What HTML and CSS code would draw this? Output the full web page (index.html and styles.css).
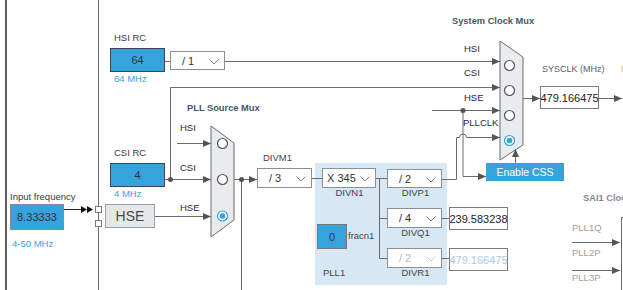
FILE: index.html
```html
<!DOCTYPE html>
<html lang="en">
<head>
    <meta charset="UTF-8">
    <title>Clock Configuration</title>
    <link rel="stylesheet" href="styles.css">
</head>
<body>

<div class="diagram">
    <!-- PLL1 block background -->
    <div class="pll-panel"></div>

    <!-- wires, muxes, arrows -->
    <svg class="wires" width="623" height="290" viewBox="0 0 623 290">
        <defs>
            <marker id="arr" markerUnits="userSpaceOnUse" markerWidth="9" markerHeight="8" refX="8" refY="3.5" orient="auto">
                <path d="M0,0 L8,3.5 L0,7 z" fill="#555"/>
            </marker>
        </defs>

        <line class="rail" x1="6" y1="0" x2="6" y2="290"/>
        <line class="wire" x1="98.5" y1="0" x2="98.5" y2="290"/>

        <!-- HSI -->
        <path class="wire" d="M165 61.5 H170"/>
        <path class="wire" d="M225 61.5 H500" marker-end="url(#arr)"/>
        <path class="wire" d="M177 143.5 H211" marker-end="url(#arr)"/>

        <!-- CSI -->
        <path class="wire" d="M165 179.5 H211" marker-end="url(#arr)"/>
        <path class="wire" d="M170.5 179.5 V87.5 H500" marker-end="url(#arr)"/>
        <circle class="dot" cx="170.5" cy="179.5" r="2.5"/>

        <!-- HSE -->
        <path class="wire" d="M155 216.5 H211" marker-end="url(#arr)"/>
        <path class="wire-dark" d="M64 209.5 H82"/>
        <path d="M81 206 L87 209.5 L81 213 z M87 206 L93 209.5 L87 213 z" fill="#111"/>
        <rect class="port" x="95.5" y="206.5" width="6" height="6"/>
        <rect class="port" x="95.5" y="220.5" width="6" height="6"/>

        <!-- PLL source mux -->
        <polygon class="mux" points="211,126 234,143 234,220 211,237"/>
        <circle class="sel" cx="222.5" cy="143.5" r="5"/>
        <circle class="sel" cx="222.5" cy="179.5" r="5"/>
        <circle class="sel on" cx="222.5" cy="216" r="5"/>
        <circle class="pick" cx="222.5" cy="216" r="2.8"/>
        <path class="wire" d="M234 179.5 H257" marker-end="url(#arr)"/>
        <path class="wire" d="M241.5 179.5 V290"/>
        <circle class="dot" cx="241.5" cy="179.5" r="2.5"/>

        <!-- PLL1 dividers -->
        <path class="wire" d="M312 178.5 H322"/>
        <path class="wire" d="M376 178.5 H387 M379.5 178.5 V258.5 M379.5 218.5 H387 M379.5 258.5 H387"/>
        <path class="wire" d="M442 218.5 H449 M442 258.5 H449"/>
        <path class="wire" d="M442 179.5 H456.5 V137.5 H459.5 A3.5 3.5 0 0 1 466.5 137.5 H500" marker-end="url(#arr)"/>

        <!-- HSE to system mux and CSS -->
        <path class="wire" d="M432 110.5 H500" marker-end="url(#arr)"/>
        <path class="wire" d="M463 110.5 V176.5 H486" marker-end="url(#arr)"/>
        <circle class="dot" cx="463" cy="110.5" r="2.5"/>

        <!-- system clock mux -->
        <polygon class="mux" points="500,41 523,57 523,145 500,160"/>
        <circle class="sel" cx="509.5" cy="65.5" r="5"/>
        <circle class="sel" cx="509.5" cy="90.5" r="5"/>
        <circle class="sel" cx="509.5" cy="115.5" r="5"/>
        <circle class="sel on" cx="509.5" cy="140.5" r="5"/>
        <circle class="pick" cx="509.5" cy="140.5" r="2.8"/>
        <path class="wire" d="M515.5 163 V149" marker-end="url(#arr)"/>
        <path class="wire" d="M523 98.5 H540" marker-end="url(#arr)"/>
        <path class="wire" d="M599 98.5 H622" marker-end="url(#arr)"/>

        <!-- SAI1 mux edge -->
        <path class="wire" d="M621.5 217 V290 M621.5 217.5 H623"/>
        <path class="wire" d="M572 242.5 H620" marker-end="url(#arr)"/>
        <path class="wire" d="M572 270.5 H620" marker-end="url(#arr)"/>
    </svg>

    <!-- labels -->
    <span class="label hsi-title">HSI RC</span>
    <span class="label freq hsi-freq">64 MHz</span>
    <span class="label csi-title">CSI RC</span>
    <span class="label freq csi-freq">4 MHz</span>
    <span class="label in-title">Input frequency</span>
    <span class="label freq in-range">4-50 MHz</span>

    <span class="label mux-title pll-mux-title">PLL Source Mux</span>
    <span class="label src pll-hsi">HSI</span>
    <span class="label src pll-csi">CSI</span>
    <span class="label src pll-hse">HSE</span>

    <span class="label mux-title sys-mux-title">System Clock Mux</span>
    <span class="label src sys-hsi">HSI</span>
    <span class="label src sys-csi">CSI</span>
    <span class="label src sys-hse">HSE</span>
    <span class="label src sys-pll">PLLCLK</span>
    <span class="label sysclk-title">SYSCLK (MHz)</span>
    <span class="label hclk-title">HCLK</span>

    <span class="label div-name divm-name">DIVM1</span>
    <span class="label div-name divn-name">DIVN1</span>
    <span class="label div-name divp-name">DIVP1</span>
    <span class="label div-name divq-name">DIVQ1</span>
    <span class="label div-name divr-name">DIVR1</span>
    <span class="label frac-name">fracn1</span>
    <span class="label pll-name">PLL1</span>

    <span class="label mux-title sai-title">SAI1 Clock Mux</span>
    <span class="label sai-src sai-q">PLL1Q</span>
    <span class="label sai-src sai-p2">PLL2P</span>
    <span class="label sai-src sai-p3">PLL3P</span>

    <!-- sources -->
    <div class="node value-box hsi-box">64</div>
    <div class="node value-box csi-box">4</div>
    <div class="node value-box in-box">8.33333</div>
    <div class="node hse-box">HSE</div>
    <div class="node value-box frac-box">0</div>

    <!-- dividers -->
    <div class="node select dd-hsi"><span>/ 1</span><svg class="chev" viewBox="0 0 10 6"><polyline points="0.5,0.5 5,5 9.5,0.5"/></svg></div>
    <div class="node select dd-divm"><span>/ 3</span><svg class="chev" viewBox="0 0 10 6"><polyline points="0.5,0.5 5,5 9.5,0.5"/></svg></div>
    <div class="node select dd-divn"><span>X 345</span><svg class="chev" viewBox="0 0 10 6"><polyline points="0.5,0.5 5,5 9.5,0.5"/></svg></div>
    <div class="node select dd-divp"><span>/ 2</span><svg class="chev" viewBox="0 0 10 6"><polyline points="0.5,0.5 5,5 9.5,0.5"/></svg></div>
    <div class="node select dd-divq"><span>/ 4</span><svg class="chev" viewBox="0 0 10 6"><polyline points="0.5,0.5 5,5 9.5,0.5"/></svg></div>
    <div class="node select disabled dd-divr"><span>/ 2</span><svg class="chev" viewBox="0 0 10 6"><polyline points="0.5,0.5 5,5 9.5,0.5"/></svg></div>

    <!-- outputs -->
    <div class="node out out-sys">479.166475</div>
    <div class="node out out-q">239.583238</div>
    <div class="node out disabled out-r">479.166475</div>

    <div class="node css-btn">Enable CSS</div>
</div>

</body>
</html>
```

FILE: styles.css
```css
body {
    margin: 0;
    background: #fff;
    font-family: "Liberation Sans", Arial, sans-serif;
}

.diagram {
    position: relative;
    width: 623px;
    height: 290px;
    overflow: hidden;
    background: #fff;
}

.wires {
    position: absolute;
    left: 0;
    top: 0;
}

.wire {
    fill: none;
    stroke: #6b6b6b;
    stroke-width: 1;
}

.wire-dark {
    fill: none;
    stroke: #222;
    stroke-width: 1;
}

.rail {
    stroke: #5e5e5e;
    stroke-width: 2;
}

.dot {
    fill: #555;
}

.port {
    fill: #fff;
    stroke: #777;
}

.mux {
    fill: #e8ecef;
    stroke: #6b6b6b;
}

.sel {
    fill: #fff;
    stroke: #555;
    stroke-width: 1.2;
}

.sel.on {
    stroke: #33a3dc;
}

.pick {
    fill: #33a3dc;
}

/* PLL1 block */
.pll-panel {
    position: absolute;
    left: 315px;
    top: 163px;
    width: 132px;
    height: 122px;
    background: #d8e7f4;
}

/* text labels */
.label {
    position: absolute;
    font-size: 9.5px;
    line-height: 12px;
    color: #3a3a3a;
    white-space: nowrap;
}

.freq {
    color: #3aa2e6;
}

.src {
    color: #1e2a44;
}

.mux-title {
    font-weight: bold;
    font-size: 9.3px;
    color: #4a5563;
}

.div-name {
    color: #444;
    width: 55px;
    text-align: center;
}

.sai-src {
    color: #a99e90;
}

.hsi-title { left: 114px; top: 32px; }
.hsi-freq { left: 114px; top: 73px; }
.csi-title { left: 114px; top: 147px; }
.csi-freq { left: 114px; top: 188px; }
.in-title { left: 10px; top: 191px; }
.in-range { left: 12px; top: 238px; }

.pll-mux-title { left: 187px; top: 102px; }
.pll-hsi { left: 180px; top: 122px; }
.pll-csi { left: 180px; top: 162px; }
.pll-hse { left: 180px; top: 202px; }

.sys-mux-title { left: 452px; top: 15px; }
.sys-hsi { left: 464px; top: 43px; }
.sys-csi { left: 464px; top: 67px; }
.sys-hse { left: 464px; top: 92px; }
.sys-pll { left: 463px; top: 117px; }
.sysclk-title { left: 542px; top: 63px; color: #5c5c5c; font-size: 9px; }
.hclk-title { left: 621px; top: 63px; color: #f2b46a; }

.divm-name { left: 263px; top: 152px; width: auto; }
.divn-name { left: 322px; top: 187px; }
.divp-name { left: 388px; top: 187px; }
.divq-name { left: 388px; top: 227px; }
.divr-name { left: 388px; top: 267px; }
.frac-name { left: 348px; top: 230px; color: #444; }
.pll-name { left: 323px; top: 267px; color: #444; }

.sai-title { left: 583px; top: 192px; color: #8a8a8a; }
.sai-q { left: 572px; top: 222px; }
.sai-p2 { left: 572px; top: 247px; }
.sai-p3 { left: 572px; top: 272px; }

/* boxes */
.node {
    position: absolute;
    box-sizing: border-box;
}

.value-box {
    background: #36a4dc;
    border: 1px solid #3c4650;
    color: #333;
    font-size: 11px;
    display: flex;
    align-items: center;
    justify-content: center;
}

.hsi-box { left: 110px; top: 48px; width: 55px; height: 24px; }
.csi-box { left: 110px; top: 163px; width: 55px; height: 24px; }
.in-box { left: 10px; top: 204px; width: 54px; height: 26px; border-color: #8a8a8a; }
.frac-box { left: 317px; top: 224px; width: 30px; height: 25px; border-color: #777; }

.hse-box {
    left: 105px;
    top: 204px;
    width: 50px;
    height: 24px;
    background: #e5e8ea;
    border: 1px solid #9aa0a6;
    color: #4a4a4a;
    font-size: 14px;
    display: flex;
    align-items: center;
    justify-content: center;
}

/* dropdowns */
.select {
    background: #fff;
    border: 1px solid #8b9095;
    color: #333;
    font-size: 11px;
    display: flex;
    align-items: center;
    padding-left: 11px;
}

.select .chev {
    position: absolute;
    right: 5px;
    top: 50%;
    width: 10px;
    height: 6px;
    margin-top: -2px;
    fill: none;
    stroke: #7d858c;
    stroke-width: 1;
}

.select.disabled {
    color: #b4b8bc;
}

.select.disabled .chev {
    stroke: #c8ccd0;
}

.dd-hsi { left: 170px; top: 51px; width: 55px; height: 19px; }
.dd-divm { left: 257px; top: 168px; width: 55px; height: 20px; }
.dd-divn { left: 322px; top: 168px; width: 54px; height: 20px; padding-left: 4px; }
.dd-divp { left: 387px; top: 169px; width: 55px; height: 19px; }
.dd-divq { left: 387px; top: 208px; width: 55px; height: 20px; }
.dd-divr { left: 387px; top: 248px; width: 55px; height: 20px; }

/* output values */
.out {
    background: #fff;
    border: 1px solid #7c7c7c;
    color: #222;
    font-size: 11px;
    display: flex;
    align-items: center;
    justify-content: center;
}

.out.disabled {
    color: #a9c9ea;
}

.out-sys { left: 540px; top: 86px; width: 59px; height: 23px; }
.out-q { left: 449px; top: 207px; width: 59px; height: 23px; }
.out-r { left: 449px; top: 248px; width: 59px; height: 23px; }

.css-btn {
    left: 486px;
    top: 163px;
    width: 78px;
    height: 18px;
    background: #36a4dc;
    color: #fff;
    font-size: 10.5px;
    display: flex;
    align-items: center;
    justify-content: center;
}
```
